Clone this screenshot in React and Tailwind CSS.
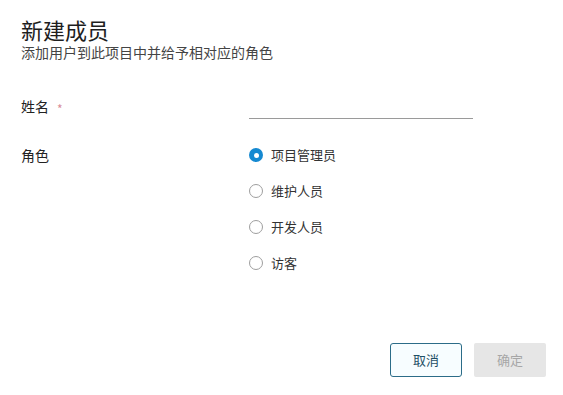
import { useState } from 'react';

const roles = ['项目管理员', '维护人员', '开发人员', '访客'];

export default function App() {
  const [role, setRole] = useState('项目管理员');
  const [name, setName] = useState('');

  return (
    <div
      className="w-[563px] h-[395px] bg-white pl-[21px] pr-[17px] pt-[15px] pb-[18px] flex flex-col text-[#222]"
      style={{ fontFamily: '"Noto Sans CJK SC", "Noto Sans", sans-serif' }}
    >
      {/* Header */}
      <h1 className="text-[22px] leading-[28px] font-normal text-[#1e1e1e]">新建成员</h1>
      <p className="text-[14px] leading-[18px] text-[#444]">添加用户到此项目中并给予相对应的角色</p>

      {/* Name */}
      <div className="flex items-start mt-[35px]">
        <div className="w-[228px] text-[14px] leading-[20px] flex items-start">
          <span>姓名</span>
          <span className="ml-[8px] text-[12px] leading-[20px] pt-[3px] text-[#d98c9a]">*</span>
        </div>
        <input
          value={name}
          onChange={(e) => setName(e.target.value)}
          className="w-[224px] h-[23px] border-b border-[#9a9a9a] outline-none text-[13px] bg-transparent"
        />
      </div>

      {/* Role */}
      <div className="flex items-start mt-[18px]">
        <div className="w-[228px] text-[14px] leading-[36px]">角色</div>
        <div className="flex flex-col">
          {roles.map((r) => (
            <label key={r} className="h-[36px] flex items-center cursor-pointer" onClick={() => setRole(r)}>
              {role === r ? (
                <span className="w-[14px] h-[14px] rounded-full bg-[#1589d1] flex items-center justify-center">
                  <span className="w-[5px] h-[5px] rounded-full bg-white" />
                </span>
              ) : (
                <span className="w-[14px] h-[14px] rounded-full border border-[#9e9e9e] bg-white" />
              )}
              <span className="ml-[8px] text-[13px] text-[#333]">{r}</span>
            </label>
          ))}
        </div>
      </div>

      {/* Actions */}
      <div className="mt-auto flex justify-end gap-[12px]">
        <button className="w-[72px] h-[34px] rounded-[3px] border border-[#2b6c88] bg-[#f7fdff] text-[13px] text-[#1f4f66]">
          取消
        </button>
        <button disabled className="w-[72px] h-[34px] rounded-[2px] bg-[#e6e6e6] text-[13px] text-[#a6a6a6]">
          确定
        </button>
      </div>
    </div>
  );
}
